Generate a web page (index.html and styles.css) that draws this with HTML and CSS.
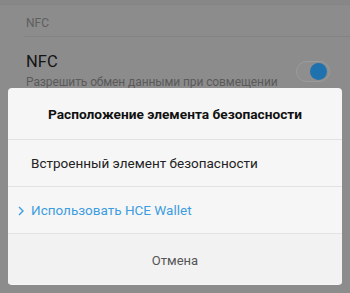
FILE: index.html
```html
<!DOCTYPE html>
<html lang="ru">
<head>
<meta charset="utf-8">
<link rel="stylesheet" href="styles.css">
</head>
<body>
<div class="screen">
  <div class="topbar"></div>
  <div class="section">NFC</div>
  <div class="row">
    <div class="row-text">
      <div class="row-title">NFC</div>
      <div class="row-sub">Разрешить обмен данными при совмещении</div>
    </div>
    <div class="toggle"><div class="knob"></div></div>
  </div>
  <div class="dialog">
    <div class="dlg-title">Расположение элемента безопасности</div>
    <div class="dlg-item">Встроенный элемент безопасности</div>
    <div class="dlg-item selected">
      <svg class="chev" width="6" height="10" viewBox="0 0 6 10"><path d="M1 1 L5 5 L1 9" fill="none" stroke="#3c9de0" stroke-width="1.4"/></svg>
      <span>Использовать HCE Wallet</span>
    </div>
    <div class="dlg-cancel">Отмена</div>
  </div>
</div>
</body>
</html>
```
FILE: styles.css
```css
* { box-sizing: border-box; }
html, body { margin: 0; padding: 0; }
body {
  width: 350px;
  height: 293px;
  overflow: hidden;
  background: #8c8c8c;
  font-family: Roboto, "Noto Sans", sans-serif;
}
.screen {
  position: relative;
  width: 350px;
  height: 293px;
}
.topbar {
  height: 5px;
  background: #878787;
  border-bottom: 1px solid #858585;
}
.section {
  margin-left: 24px;
  height: 32px;
  padding-top: 11px;
  padding-left: 2px;
  font-size: 12px;
  color: #5e5e5e;
  border-bottom: 1px solid #838383;
}
.row {
  display: flex;
  align-items: flex-start;
  padding: 15px 20px 0 26px;
}
.row-text { flex: 1; min-width: 0; }
.row-title {
  font-size: 16.5px;
  color: #141414;
  line-height: 20px;
}
.row-sub {
  font-size: 12px;
  letter-spacing: -0.1px;
  color: #5a5a5a;
  line-height: 20px;
  white-space: nowrap;
}
.toggle {
  flex: none;
  width: 34px;
  height: 21px;
  border-radius: 11px;
  border: 1px solid #9c9c9c;
  background: #8e8e8e;
  position: relative;
  margin-top: 9px;
}
.knob {
  position: absolute;
  right: 2px;
  top: 1px;
  width: 17px;
  height: 17px;
  border-radius: 50%;
  background: #1f72ad;
}
.dialog {
  position: absolute;
  left: 8px;
  top: 88px;
  width: 334px;
  height: 197px;
  background: #f6f6f6;
  border-radius: 4px;
  overflow: hidden;
}
.dlg-title {
  height: 52px;
  display: flex;
  align-items: center;
  justify-content: center;
  font-weight: bold;
  font-size: 13.7px;
  color: #111;
  border-bottom: 1px solid #e2e2e2;
}
.dlg-item {
  height: 47px;
  display: flex;
  align-items: center;
  padding-left: 23px;
  font-size: 13.5px;
  color: #222;
  border-bottom: 1px solid #e2e2e2;
  position: relative;
}
.dlg-item.selected { color: #3c9de0; }
.chev {
  position: absolute;
  left: 10px;
  top: 19px;
}
.dlg-cancel {
  height: 50px;
  display: flex;
  align-items: center;
  justify-content: center;
  padding-top: 3px;
  font-size: 13px;
  color: #555;
  background: #f2f2f2;
}
```
